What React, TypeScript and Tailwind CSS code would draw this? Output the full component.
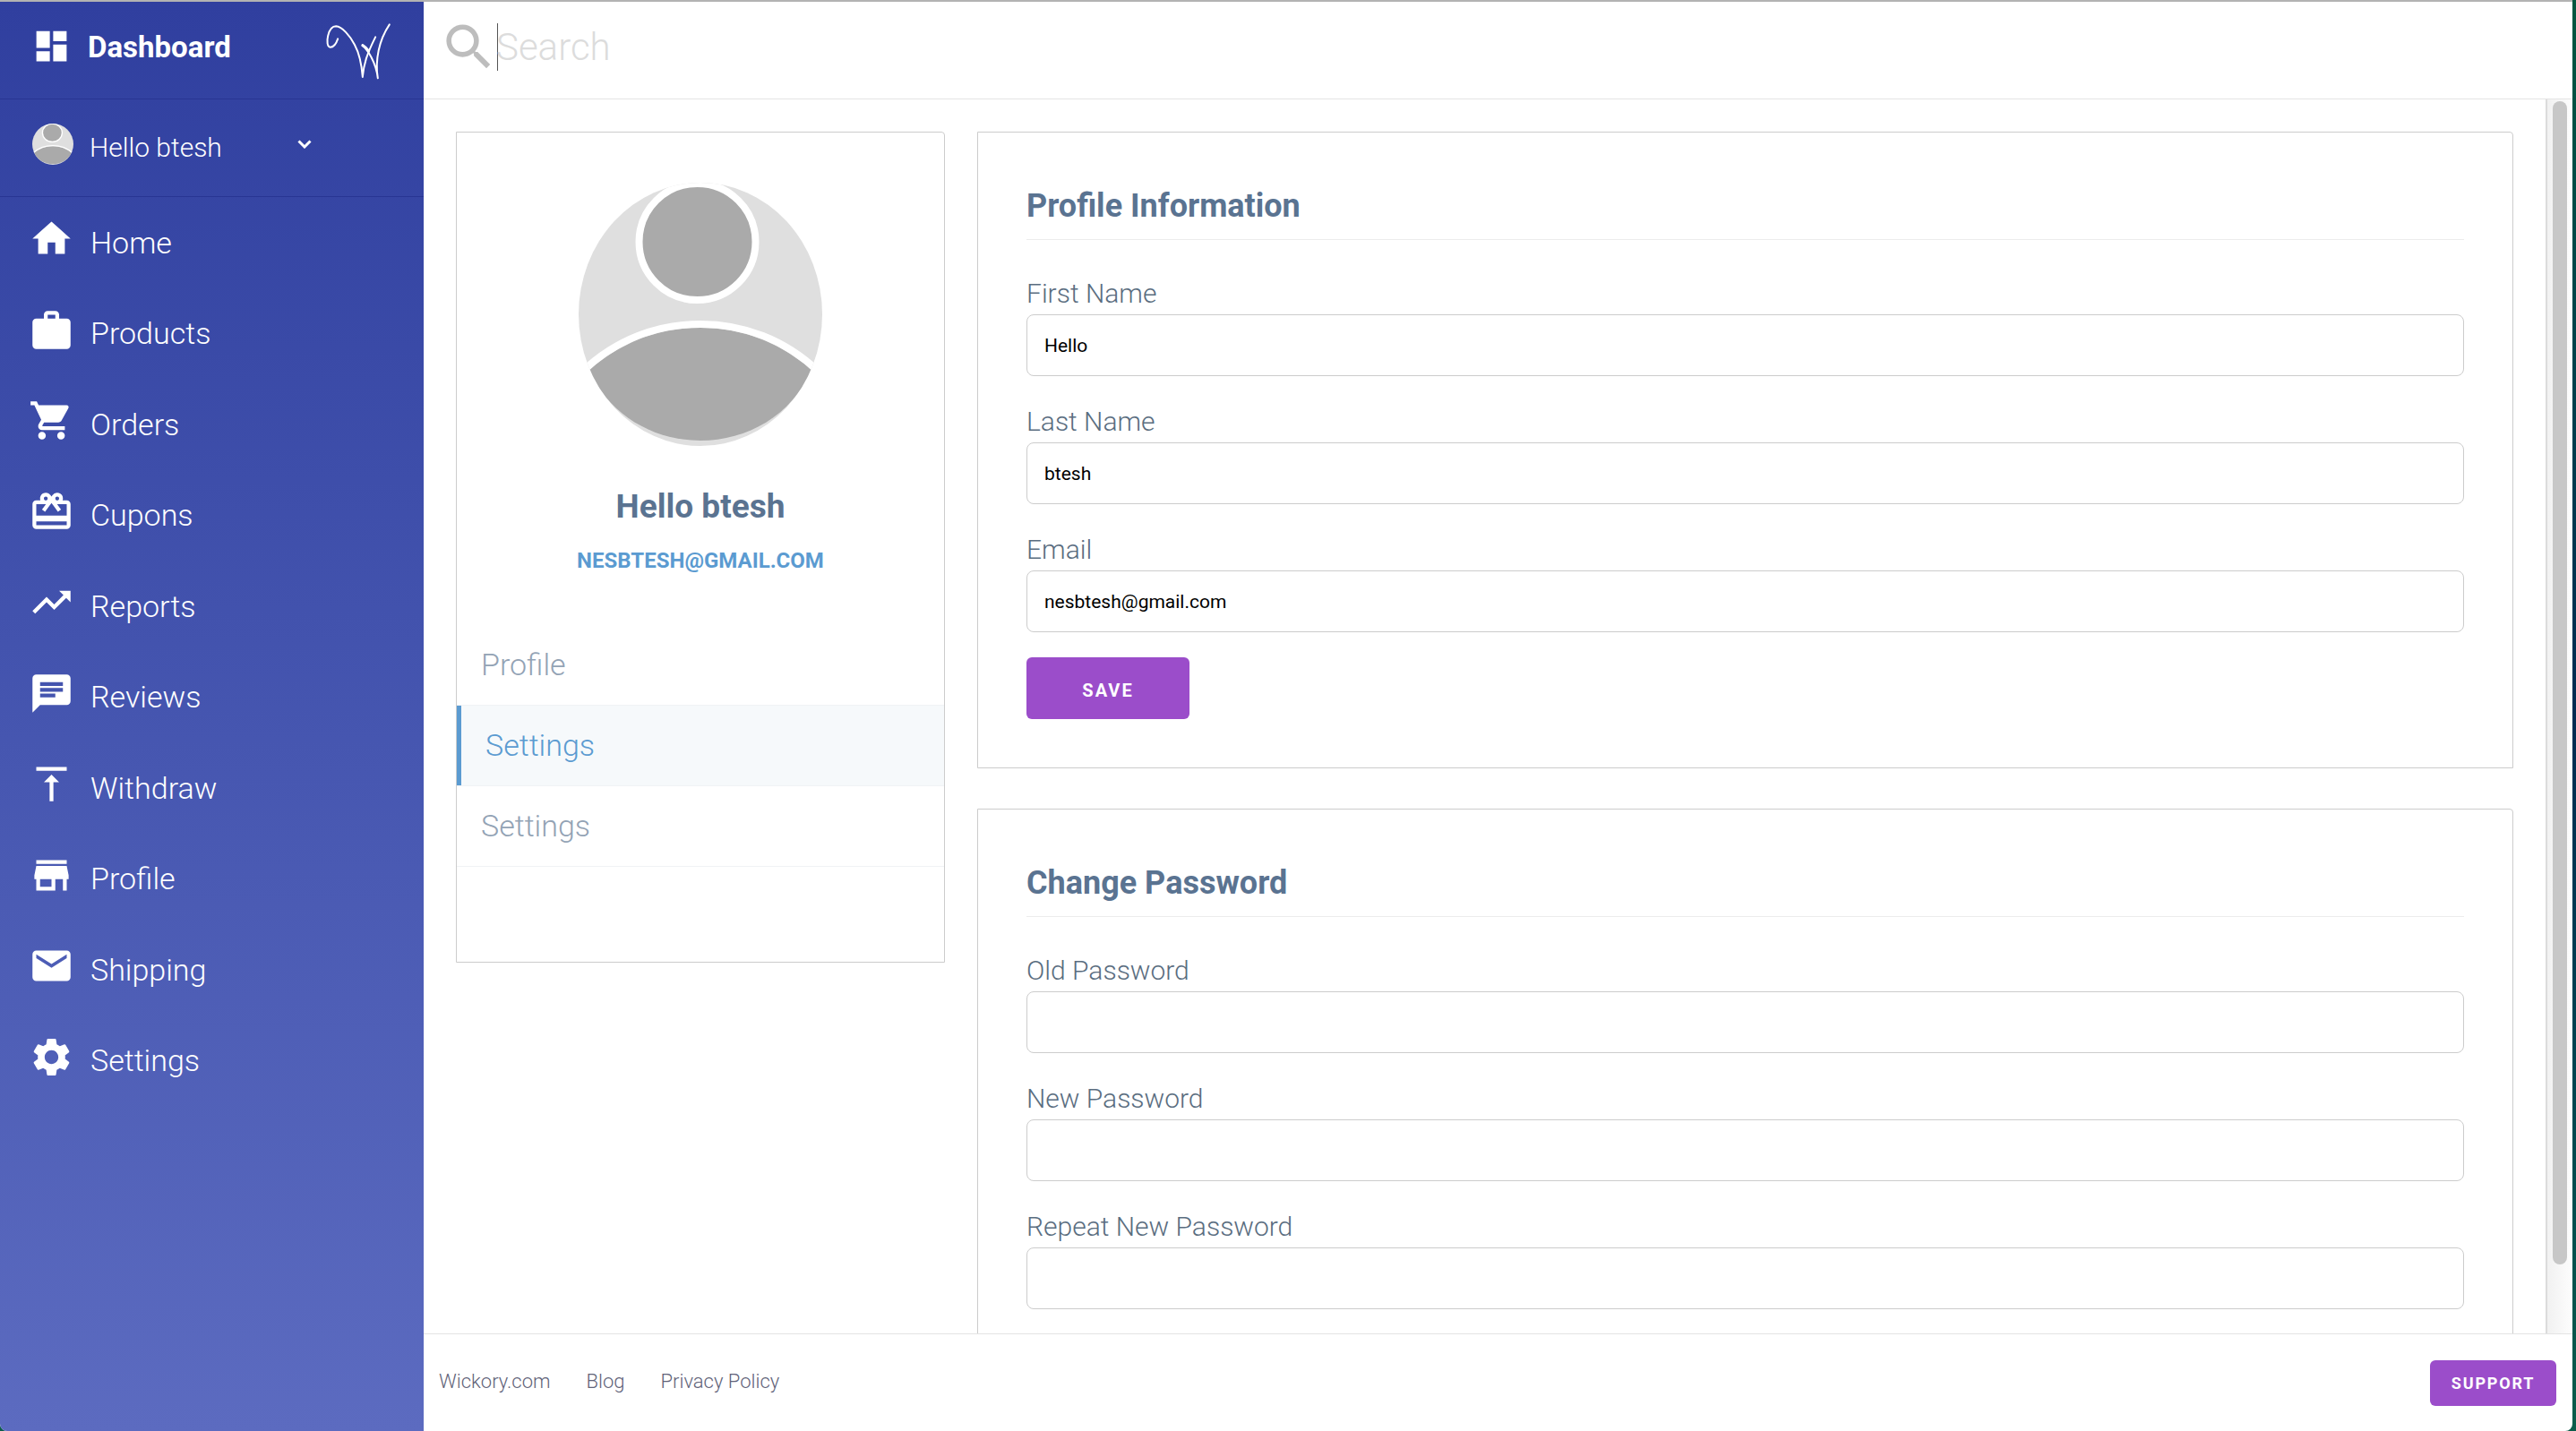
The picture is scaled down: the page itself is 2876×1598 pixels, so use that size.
import type { ReactNode } from "react";
import {
  MdCardGiftcard,
  MdChat,
  MdDashboard,
  MdEmail,
  MdHome,
  MdSearch,
  MdSettings,
  MdShoppingCart,
  MdStore,
  MdTrendingUp,
  MdVerticalAlignTop,
} from "react-icons/md";
import type { IconType } from "react-icons";

function BagIcon({ className }: { className?: string }) {
  return (
    <svg viewBox="0 0 24 24" className={className} fill="currentColor" aria-hidden="true">
      <path d="M20 6h-4V4c0-1.110-.89-2-2-2h-4c-1.110 0-2 .89-2 2v2H4c-1.110 0-2 .89-2 2v12c0 1.110.89 2 2 2h16c1.110 0 2-.89 2-2V8c0-1.110-.89-2-2-2zm-6 0h-4V4h4v2z" />
    </svg>
  );
}

function ChevronIcon() {
  return (
    <svg viewBox="0 0 16 10" className="h-2.5 w-4" fill="none" stroke="currentColor" strokeWidth="3" aria-hidden="true">
      <path d="M1.500 1.500L8 8L14.500 1.500" />
    </svg>
  );
}

const navItems: { label: string; Icon: IconType | typeof BagIcon }[] = [
  { label: "Home", Icon: MdHome },
  { label: "Products", Icon: BagIcon },
  { label: "Orders", Icon: MdShoppingCart },
  { label: "Cupons", Icon: MdCardGiftcard },
  { label: "Reports", Icon: MdTrendingUp },
  { label: "Reviews", Icon: MdChat },
  { label: "Withdraw", Icon: MdVerticalAlignTop },
  { label: "Profile", Icon: MdStore },
  { label: "Shipping", Icon: MdEmail },
  { label: "Settings", Icon: MdSettings },
];

function Logo() {
  return (
    <svg
      viewBox="70 74 218 192"
      className="mt-2 h-16 w-[73px]"
      fill="none"
      stroke="white"
      strokeLinecap="round"
      strokeLinejoin="round"
      aria-label="Wickory"
      role="img"
    >
      <path
        strokeWidth="6"
        d="M109 129C103 147 93 157 84 157C73 156 72 136 76 119C81 98 91 87 103 87C124 88 150 120 165 148C184 183 189 215 192 257C196 213 206 181 235 123"
      />
      <path strokeWidth="6" d="M192 151C209 166 237 208 243 261C233 200 247 133 282 81" />
      <path strokeWidth="9" d="M192 151C199 155 206 162 212 170" />
    </svg>
  );
}

function Avatar({ id, className }: { id: string; className: string }) {
  return (
    <svg viewBox="0 0 272 294" preserveAspectRatio="none" className={className} role="img" aria-label="Avatar">
      <clipPath id={id}>
        <ellipse cx="136" cy="147" rx="136" ry="147" />
      </clipPath>
      <g clipPath={`url(#${id})`}>
        <rect width="272" height="294" fill="#dfdfdf" />
        <ellipse cx="132.500" cy="66" rx="65" ry="65" fill="#aaaaaa" stroke="#ffffff" strokeWidth="8" />
        <path
          d="M12 209C48 178 90 162 136 162C182 162 224 178 260 209C238 260 188 288 136 288C84 288 34 260 12 209Z"
          fill="#aaaaaa"
        />
        <path d="M4 211C42 175 88 158 136 158C184 158 230 175 268 211" fill="none" stroke="#ffffff" strokeWidth="8" />
      </g>
    </svg>
  );
}

function Field({ id, label, type, value }: { id: string; label: string; type: string; value?: string }) {
  return (
    <div className="flex flex-col">
      <label htmlFor={id} className="text-[30px] leading-[46px] font-light text-[#5a6d80]">
        {label}
      </label>
      <input
        id={id}
        type={type}
        defaultValue={value}
        className="h-[69px] w-full rounded-lg border border-[#cccccc] bg-white px-[19px] text-[21px] text-black outline-none"
      />
    </div>
  );
}

function Panel({ title, children }: { title: string; children: ReactNode }) {
  return (
    <section className="rounded-tr-sm border border-[#cccccc] bg-white p-[54px]">
      <h2 className="border-b border-[#ececec] pb-[9px] text-[36px] leading-[56px] font-bold text-[#5a7391]">{title}</h2>
      <form className="mt-[37px] flex flex-col gap-7">{children}</form>
    </section>
  );
}

const menuItems = [
  { label: "Profile", active: false },
  { label: "Settings", active: true },
  { label: "Settings", active: false },
];

function ProfileCard() {
  return (
    <section className="flex w-[546px] shrink-0 flex-col items-center self-start rounded-tr-sm border border-[#cccccc] bg-white pt-14 pb-[106px]">
      <Avatar id="avatar-large" className="h-[294px] w-[272px]" />
      <h2 className="mt-11 text-[37px] leading-[48px] font-bold text-[#5a7391]">Hello btesh</h2>
      <p className="mt-5 text-[24px] leading-8 font-bold text-[#5b9bd1] uppercase">nesbtesh@gmail.com</p>
      <ul className="mt-14 w-full">
        {menuItems.map((item, i) => (
          <li key={i} className="border-b border-[#f0f2f5]">
            <a
              href="#"
              className={
                item.active
                  ? "block border-l-5 border-[#5b9bd1] bg-[#f6f9fb] pl-[27px] text-[34px] leading-[89px] font-light text-[#5b9bd1]"
                  : "block pl-[27px] text-[34px] leading-[89px] font-light text-[#93a3b5]"
              }
            >
              {item.label}
            </a>
          </li>
        ))}
      </ul>
    </section>
  );
}

function Sidebar() {
  return (
    <aside className="flex w-[473px] shrink-0 flex-col bg-linear-to-b from-[#303f9f] to-[#5c6bc0] text-white">
      <div className="flex h-[109px] items-center border-b border-[#283593] pr-9 pb-1.5 pl-[35px]">
        <span className="pb-1">
          <MdDashboard className="size-[45px]" />
        </span>
        <h1 className="ml-[18px] flex-1 text-[33px] leading-10 font-bold">Dashboard</h1>
        <Logo />
      </div>
      <button type="button" className="flex h-[109px] items-center border-b border-[#283593] pl-9 text-left">
        <span className="pb-2">
          <Avatar id="avatar-small" className="size-[46px]" />
        </span>
        <span className="ml-[18px] w-[232px] text-[30px] leading-10 font-light">Hello btesh</span>
        <span className="pb-2">
          <ChevronIcon />
        </span>
      </button>
      <nav>
        <ul className="grid min-h-[1015px] auto-rows-fr">
          {navItems.map(({ label, Icon }) => (
            <li key={label}>
              <a href="#" className="flex h-full items-center pl-8">
                <span className="pb-2">
                  <Icon className="size-[51px]" />
                </span>
                <span className="ml-[18px] text-[34px] leading-10 font-light">{label}</span>
              </a>
            </li>
          ))}
        </ul>
      </nav>
    </aside>
  );
}

export default function App() {
  return (
    <div className="h-screen overflow-hidden bg-linear-to-b from-[#04563f] via-[#012a52] to-[#0b5c4a] pr-1 font-['Roboto',sans-serif]">
      <div className="flex h-full flex-col overflow-hidden rounded-b-lg border-t-2 border-[#b3b3b3] bg-white">
        <div className="flex min-h-0 flex-1">
          <Sidebar />
          <div className="flex min-w-0 flex-1 flex-col">
            <header className="flex h-[109px] shrink-0 items-center border-b border-[#e4e4e4] pb-[7px] pl-[17px]">
              <label htmlFor="search" aria-label="Search">
                <MdSearch className="size-[67px] text-[#bdbdbd]" />
              </label>
              <span className="-ml-0.5 h-[53px] w-px bg-[#555555]" />
              <input
                id="search"
                type="search"
                placeholder="Search"
                className="-ml-0.5 h-16 flex-1 text-[42px] font-light outline-none placeholder:text-[#dcdcdc]"
              />
            </header>
            <div className="flex min-h-0 flex-1">
              <main className="flex min-w-0 flex-1 gap-9 overflow-hidden px-9 pt-9">
                <ProfileCard />
                <div className="flex min-w-0 flex-1 flex-col gap-[45px] self-start">
                  <Panel title="Profile Information">
                    <Field id="first-name" label="First Name" type="text" value="Hello" />
                    <Field id="last-name" label="Last Name" type="text" value="btesh" />
                    <Field id="email" label="Email" type="email" value="nesbtesh@gmail.com" />
                    <button
                      type="button"
                      className="h-[69px] w-[182px] rounded-md bg-[#9b4dca] pt-1 text-[20px] font-bold tracking-widest text-white"
                    >
                      SAVE
                    </button>
                  </Panel>
                  <Panel title="Change Password">
                    <Field id="old-password" label="Old Password" type="password" />
                    <Field id="new-password" label="New Password" type="password" />
                    <Field id="repeat-password" label="Repeat New Password" type="password" />
                  </Panel>
                </div>
              </main>
              <div className="flex w-[30px] shrink-0 justify-center border-l-2 border-[#dcdcdc] bg-linear-to-r from-[#f1f1f1] to-[#fdfdfd] pt-0.5 pb-[77px]">
                <div className="w-4 rounded-full bg-[#c7c7c7]" />
              </div>
            </div>
            <footer className="flex h-[109px] shrink-0 items-center justify-between border-t border-[#e4e4e4] pr-[18px] pl-[17px]">
              <nav className="flex gap-10 pb-[3px] text-[22px] font-light text-[#5f6379]">
                <a href="#">Wickory.com</a>
                <a href="#">Blog</a>
                <a href="#">Privacy Policy</a>
              </nav>
              <button
                type="button"
                className="h-[51px] w-[141px] rounded-md bg-[#9b4dca] text-[18px] font-bold tracking-widest text-white"
              >
                SUPPORT
              </button>
            </footer>
          </div>
        </div>
      </div>
    </div>
  );
}
